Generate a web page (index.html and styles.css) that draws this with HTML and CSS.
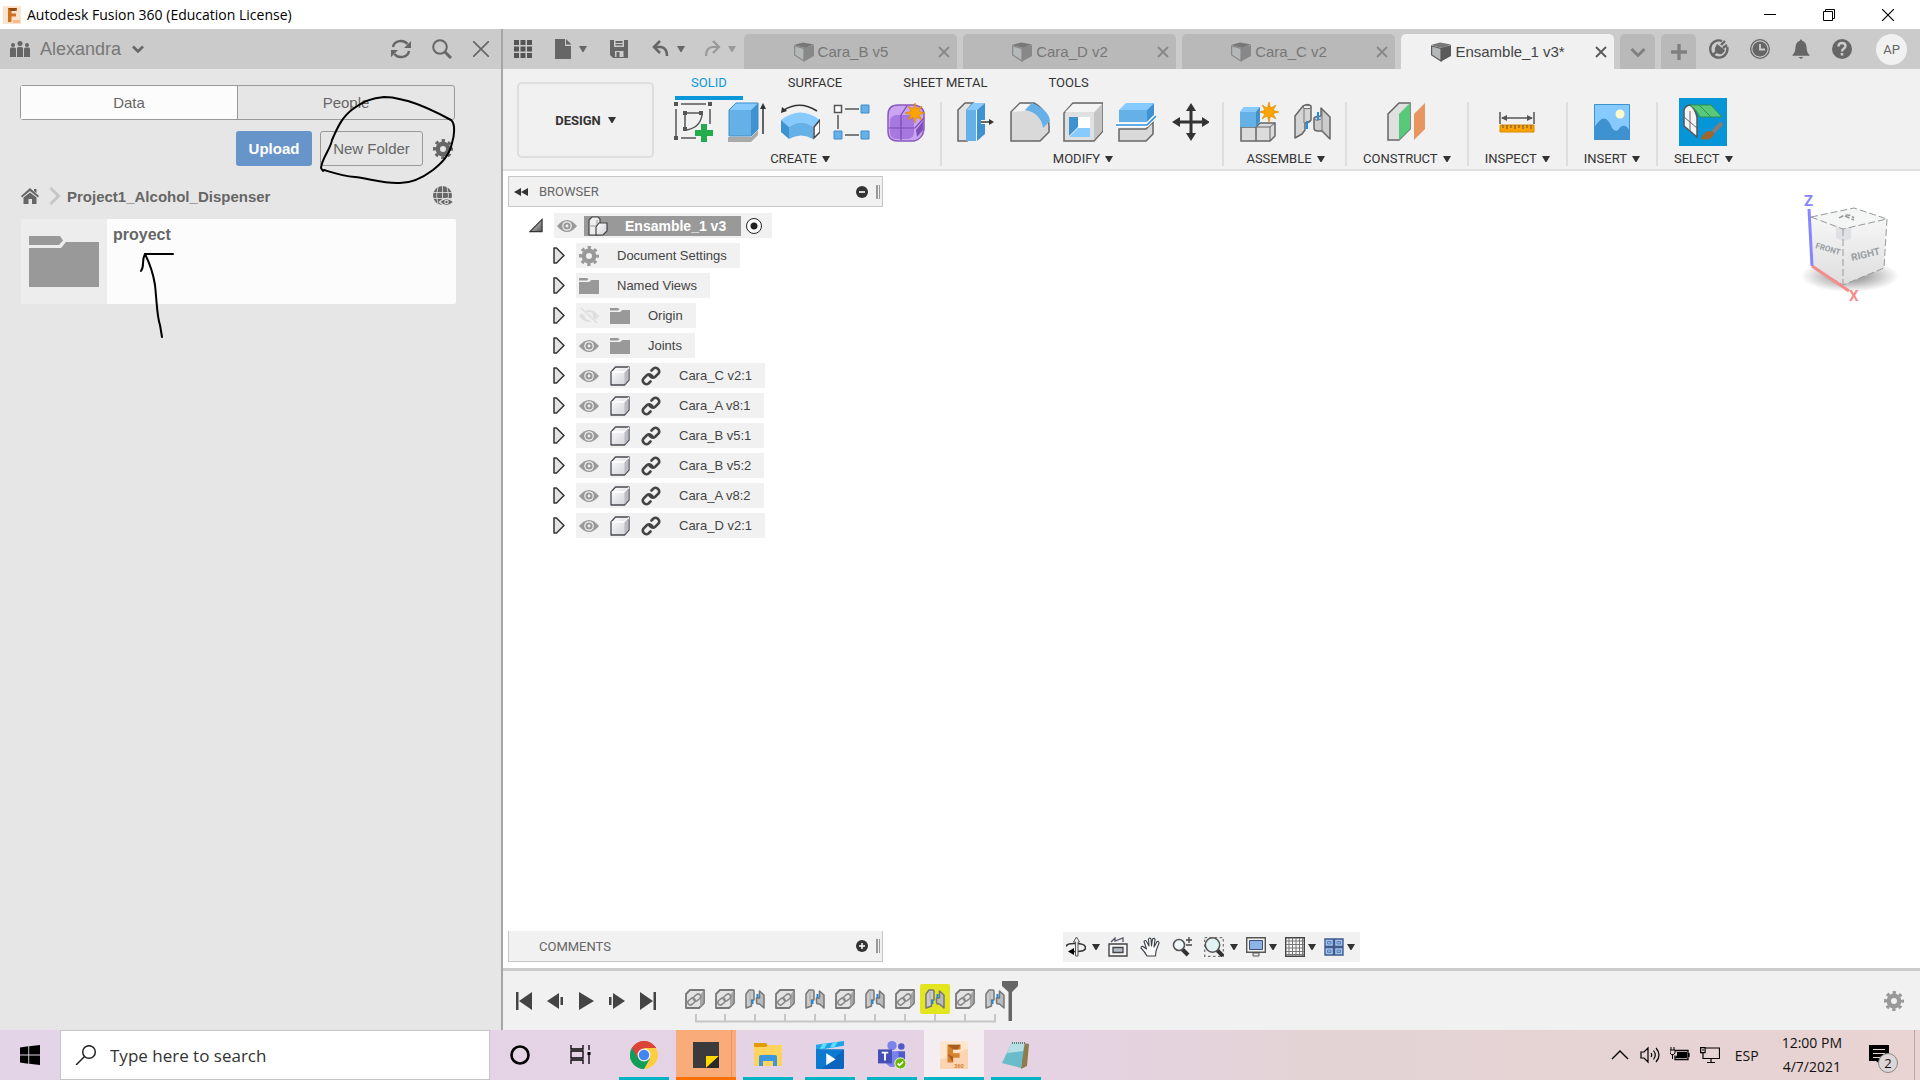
FILE: index.html
```html
<!DOCTYPE html>
<html lang="en">
<head>
  <meta charset="UTF-8">
  <meta name="viewport" content="width=device-width, initial-scale=1.0">
  <title>Autodesk Fusion 360 (Education License)</title>
  <link rel="stylesheet" href="styles.css">
</head>
<body>
  <!-- shared icons -->
  <svg class="sprite" aria-hidden="true">
    <defs>
      <linearGradient id="boxFill" x1="0" y1="0" x2="1" y2="1"><stop offset="0" stop-color="#fff"/><stop offset="1" stop-color="#cfd0d6"/></linearGradient>
      <linearGradient id="foldFill" x1="0" y1="0" x2="1" y2="1"><stop offset="0" stop-color="#eee"/><stop offset="1" stop-color="#555"/></linearGradient>
    </defs>
    <symbol id="caret" viewBox="0 0 8 6"><path d="M0 0h8L4.500 6h-1z" fill="currentColor"/></symbol>
    <symbol id="cross" viewBox="0 0 12 12"><path d="M1 1l10 10M11 1L1 11" stroke="currentColor" stroke-width="1.800" fill="none"/></symbol>
    <symbol id="gear" viewBox="0 0 20 20"><circle cx="10" cy="10" r="5.200" fill="none" stroke="currentColor" stroke-width="4.400"/><circle cx="10" cy="10" r="8.500" fill="none" stroke="currentColor" stroke-width="3" stroke-dasharray="3.340" stroke-dashoffset="1.670"/></symbol>
    <symbol id="eye" viewBox="0 0 20 14"><path d="M0 7Q10-5 20 7Q10 19 0 7z" fill="#999"/><circle cx="10" cy="7" r="4.800" fill="#f1f1f1"/><circle cx="10" cy="7" r="3.600" fill="#999"/><circle cx="10" cy="7" r="1.400" fill="#f1f1f1"/></symbol>
    <symbol id="eye-off" viewBox="0 0 20 16"><path d="M0 8Q10-4 20 8Q10 20 0 8z" fill="#dedede"/><circle cx="10" cy="8" r="4" fill="#f1f1f1"/><circle cx="10" cy="8" r="2" fill="#dedede"/><path d="M1 1l17 15" stroke="#f1f1f1" stroke-width="4"/><path d="M2 0l16 15" stroke="#dedede" stroke-width="1.600"/></symbol>
    <symbol id="folder" viewBox="0 0 20 16"><path d="M0 0h8l1.500 1.300L8 2.600H0zM0 4h10l2.500-2H20v14H0z" fill="#999"/></symbol>
    <symbol id="box" viewBox="0 0 20 20"><path d="M1 6L5.500 1H19v13l-4.500 5H1z" fill="url(#boxFill)" stroke="#4a4a52" stroke-width="1.300" stroke-linejoin="round"/><path d="M1.700 6h13L19 1.500" fill="none" stroke="#fff" stroke-width="1.500"/><path d="M14.500 6.500V18.500L18.400 14V2z" fill="#b9bac2"/></symbol>
    <symbol id="link" viewBox="0 0 20 20"><g fill="none" stroke="#444" stroke-width="2.600" stroke-linecap="round"><path d="M10.500 4.500l2-2q2-1.500 4 0l1 1q1.500 2 0 4l-3.500 3.500q-2 1.500-4 0l-1.500-1.500"/><path d="M9.500 15.500l-2 2q-2 1.500-4 0l-1-1q-1.500-2 0-4L6 9q2-1.500 4 0l1.500 1.500"/></g></symbol>
    <symbol id="expand" viewBox="0 0 12 17"><path d="M1 1h2.500l7.500 7.500L3.500 16H1z" fill="#e4e4e4" stroke="#333" stroke-width="1.500" stroke-linejoin="round"/></symbol>
    <symbol id="doc-cube" viewBox="0 0 20 20"><path d="M0 3L9 0.500l11 2L11 6z" fill="#777"/><path d="M0.600 4L10 6.500V19L0.600 13z" fill="#b5b8b8" stroke="currentColor" stroke-width="1.200"/><path d="M10 6l10-3v11l-10 5.500z" fill="currentColor"/></symbol>
    <symbol id="f-link" viewBox="0 0 20 20"><path d="M1 5L5 1h14v13l-5 5H1z" fill="#e2e2e2" stroke="#777" stroke-width="1.800" stroke-linejoin="round"/><path d="M15 6v12l3.500-4V2z" fill="#a6a6a6"/><g fill="none" stroke="#888" stroke-width="1.500"><rect x="8" y="6" width="8" height="5" rx="2.500" transform="rotate(-40 12 8.500)"/><rect x="2.500" y="10" width="8" height="5" rx="2.500" transform="rotate(-40 6.500 12.500)"/></g></symbol>
    <symbol id="f-joint" viewBox="0 0 20 20"><path d="M1 5l3-4h3.500q1.500 0 1.500 1.500V11H6.500v6L1 19z" fill="#ccc" stroke="#777" stroke-width="1.500" stroke-linejoin="round"/><path d="M5 3v9" stroke="#aaa"/><path d="M14.500 2L19 6v13l-4.500-4H13q-1.500 0-1.500-1.500V9h3z" fill="#bbb" stroke="#777" stroke-width="1.500" stroke-linejoin="round"/><path d="M7.500 11v4M12.500 5v4" stroke="#1e88d8" stroke-width="2"/></symbol>
    <symbol id="star" viewBox="0 0 20 20"><path d="M10 0l1.600 6L17 3l-3 5.300 6 1.700-6 1.700L17 17l-5.400-3L10 20l-1.600-6L3 17l3-5.300L0 10l6-1.700L3 3l5.400 3z" fill="#ffa300" stroke="#d98800" stroke-width=".6"/></symbol>
  </svg>

  <header class="titlebar">
    <svg class="i18" viewBox="0 0 18 18"><rect width="18" height="18" fill="#fde3cb"/><path d="M5 2h9v3H8.500v2.500H13v3H8.500V16H5z" fill="#cf7022"/><path d="M5 2h9l-2 3H8z" fill="#8d4a14"/><path d="M10 14h7v3h-7z" fill="#f7bb8a"/></svg>
    <h1>Autodesk Fusion 360 (Education License)</h1>
    <div class="window-buttons">
      <button aria-label="Minimize"><svg viewBox="0 0 12 12"><path d="M0 5.500h12" stroke="#000"/></svg></button>
      <button aria-label="Restore"><svg viewBox="0 0 12 12"><path d="M.5 2.500h9v9h-9zM2.500 2.500v-2h9v9h-2" fill="none" stroke="#000"/></svg></button>
      <button aria-label="Close"><svg viewBox="0 0 12 12"><path d="M0 0l12 12M12 0L0 12" stroke="#000" stroke-width="1.200"/></svg></button>
    </div>
  </header>

  <div class="workspace">
    <aside class="data-panel">
      <div class="data-head">
        <svg class="i20" viewBox="0 0 20 16" fill="#666"><circle cx="3" cy="4" r="2"/><circle cx="10" cy="2.500" r="2.500"/><circle cx="17" cy="4" r="2"/><path d="M0 8q0-1.500 1.500-1.500h3Q6 6.500 6 8v8H0zM7 7.500Q7 6 8.500 6h3Q13 6 13 7.500V16H7zM14 8q0-1.500 1.500-1.500h3Q20 6.500 20 8v8h-6z"/></svg>
        <button class="team">Alexandra <svg viewBox="0 0 12 8"><path d="M1 1.500l5 5 5-5" fill="none" stroke="#666" stroke-width="2.500"/></svg></button>
        <div class="data-tools">
          <button aria-label="Refresh"><svg class="i20" viewBox="0 0 20 20"><path d="M2 8A8 7 0 0 1 16.500 5M18 12A8 7 0 0 1 3.500 15" fill="none" stroke="#666" stroke-width="2.400"/><path d="M20 2v7h-7zM0 18v-7h7z" fill="#666"/></svg></button>
          <button aria-label="Search"><svg class="i20" viewBox="0 0 20 20"><circle cx="8" cy="8" r="6.800" fill="none" stroke="#666" stroke-width="2"/><path d="M13 13l6 6" stroke="#666" stroke-width="3"/></svg></button>
          <button aria-label="Close panel"><svg class="i16" viewBox="0 0 16 16"><path d="M0 0l16 16M16 0L0 16" stroke="#666" stroke-width="1.600"/></svg></button>
        </div>
      </div>
      <div class="data-body">
        <div class="switch">
          <button class="active">Data</button>
          <button>People</button>
        </div>
        <div class="actions">
          <button class="upload">Upload</button>
          <button class="new-folder">New Folder</button>
          <button class="gear" aria-label="Settings"><svg class="i20"><use href="#gear"/></svg></button>
        </div>
        <nav class="crumbs">
          <a href="#" aria-label="Home"><svg class="i18" viewBox="0 0 18 16" fill="#666"><path d="M9 0l9 8-1 1.500L9 3 1 9.500 0 8zM13 1h2.500v4L13 3z"/><path d="M2.500 9.500L9 4.500l6.500 5V16H11v-5H7.500v5h-5z"/></svg></a>
          <svg class="sep" viewBox="0 0 12 18"><path d="M1.500 1l8 8-8 8" fill="none" stroke="#c6c6c6" stroke-width="3"/></svg>
          <a href="#">Project1_Alcohol_Dispenser</a>
          <button class="globe" aria-label="Open on web"><svg class="i20" viewBox="0 0 20 20"><circle cx="9.500" cy="9.500" r="9.500" fill="#666"/><path d="M0 6.500h19M0 12.500h19M9.500 0v19M5 1q-3 8.500 0 17M14 1q3 8.500 0 17" fill="none" stroke="#e6e6e6" stroke-width=".8"/><path d="M6.500 16q7-7 14 0-7 7-14 0z" fill="#666" stroke="#e6e6e6" stroke-width="1.200"/><circle cx="13.500" cy="16" r="2.300" fill="#e6e6e6"/><circle cx="13.500" cy="16" r="1.200" fill="#666"/></svg></button>
        </nav>
        <div class="project">
          <div class="thumb"><svg viewBox="0 0 70 51" fill="#999"><path d="M0 0h31l3 4.500L30 9H0zM0 12h32l5-6h33v45H0z"/></svg></div>
          <a href="#">proyect</a>
        </div>
      </div>
      <!-- pen marks -->
      <svg class="ink" viewBox="0 29 501 320" fill="none" stroke="#000" stroke-width="2" stroke-linecap="round" stroke-linejoin="round">
        <path d="M323 171L321 168C322 158 331 148 332 140C338 126 343 116 353 109C364 101 372 98 384 97C396 97 398 99 408 101C425 106 440 114 451 120C456 124 454 137 452 143C449 157 440 164 433 170C421 179 410 184 397 183C382 183 366 178 355 177C343 176 334 173 324 170"/>
        <path d="M141 271C145 266 141 261 145 254H173M145 254C150 264 153 272 155 285C157 304 157 317 160 325L162 337"/>
      </svg>
    </aside>

    <main class="editor">
      <div class="docbar">
        <div class="quick">
          <button aria-label="Data panel"><svg class="i20" viewBox="0 0 20 20" fill="#555"><path d="M1 1h5v5H1zM7.500 1h5v5h-5zM14 1h5v5h-5zM1 7.500h5v5H1zM7.500 7.500h5v5h-5zM14 7.500h5v5h-5zM1 14h5v5H1zM7.500 14h5v5h-5zM14 14h5v5h-5z"/></svg></button>
          <button aria-label="File"><svg class="i20" viewBox="0 0 20 20" fill="#666"><path d="M2 0h10v7h6v13H2z"/><path d="M13 0l5.500 5.500H13z"/></svg><svg class="caret"><use href="#caret"/></svg></button>
          <button class="save" aria-label="Save"><svg class="i20" viewBox="0 0 20 20"><path d="M1 1h18v18H4l-3-3z" fill="#666"/><path d="M5 1h10v7H5zM6 12h8.500v6H6z" fill="#ccc"/><path d="M6.500 2h7v2h-7zM6.500 5h7v1.500h-7zM7.500 13h3v6h-3z" fill="#666"/></svg></button>
          <button aria-label="Undo"><svg class="i20" viewBox="0 0 20 20"><path d="M3 8h7q6 1 6 9" fill="none" stroke="#666" stroke-width="2.600"/><path d="M9 2L3 8l6 6" fill="none" stroke="#666" stroke-width="2.600"/></svg><svg class="caret"><use href="#caret"/></svg></button>
          <button class="off" aria-label="Redo" disabled><svg class="i20" viewBox="0 0 20 20"><path d="M14 8H7q-6 1-6 9" fill="none" stroke="#999" stroke-width="2.200"/><path d="M8 2l6 6-6 6" fill="none" stroke="#999" stroke-width="2.200"/></svg><svg class="caret"><use href="#caret"/></svg></button>
        </div>
        <div class="tabs">
          <div class="tab"><a href="#"><svg class="i20"><use href="#doc-cube"/></svg>Cara_B v5</a><button aria-label="Close tab"><svg class="i12"><use href="#cross"/></svg></button></div>
          <div class="tab"><a href="#"><svg class="i20"><use href="#doc-cube"/></svg>Cara_D v2</a><button aria-label="Close tab"><svg class="i12"><use href="#cross"/></svg></button></div>
          <div class="tab"><a href="#"><svg class="i20"><use href="#doc-cube"/></svg>Cara_C v2</a><button aria-label="Close tab"><svg class="i12"><use href="#cross"/></svg></button></div>
          <div class="tab active"><a href="#"><svg class="i20"><use href="#doc-cube"/></svg>Ensamble_1 v3*</a><button aria-label="Close tab"><svg class="i12"><use href="#cross"/></svg></button></div>
          <button class="tab-btn" aria-label="All tabs"><svg class="i16" viewBox="0 0 16 16"><path d="M1.500 5L8 11.500 14.500 5" fill="none" stroke="#808080" stroke-width="3"/></svg></button>
          <button class="tab-btn" aria-label="New tab"><svg class="i16" viewBox="0 0 16 16"><path d="M0 8h16M8 0v16" stroke="#808080" stroke-width="3.400"/></svg></button>
        </div>
        <div class="status">
          <button aria-label="Extensions"><svg class="i20" viewBox="0 0 20 20"><path d="M13 2A8.600 8.600 0 1 0 18.200 8" fill="none" stroke="#666" stroke-width="2.400"/><path d="M5 5l7 7" stroke="#ccc" stroke-width="1.500"/><path d="M3 17l5-5M12 6l4-4M14 9l4-3" stroke="#666" stroke-width="2.400"/><path d="M8 5l8 6q-2 5-6 4-5-1-4-6z" fill="#666"/></svg></button>
          <button aria-label="Job status"><svg class="i20" viewBox="0 0 20 20"><circle cx="10" cy="10" r="9.300" fill="none" stroke="#666" stroke-width="1.300"/><circle cx="10" cy="10" r="7.600" fill="#666"/><path d="M10 5v5.500h5" fill="none" stroke="#ccc" stroke-width="1.800"/></svg></button>
          <button aria-label="Notifications"><svg class="i20" viewBox="0 0 20 20" fill="#666"><path d="M10 0l1.500 2Q15 3 15.500 8q0 5 3 8v.8h-17V16q3-3 3-8Q5 3 8.500 2zM7.500 18h5l-2.500 2z"/></svg></button>
          <button aria-label="Help"><svg class="i20" viewBox="0 0 20 20"><circle cx="10" cy="10" r="10" fill="#666"/><path d="M6.500 7.500q0-3.500 3.500-3.500t3.500 3q0 1.500-1.800 2.700T10 12.500" fill="none" stroke="#ccc" stroke-width="2.400"/><path d="M8.700 14h2.600v2.500H8.700z" fill="#ccc"/></svg></button>
          <button class="avatar">AP</button>
        </div>
      </div>

      <div class="ribbon">
        <button class="design">DESIGN <svg class="caret"><use href="#caret"/></svg></button>
        <div class="ribbon-main">
          <nav class="modes">
            <a href="#" class="active">SOLID</a>
            <a href="#">SURFACE</a>
            <a href="#">SHEET METAL</a>
            <a href="#">TOOLS</a>
          </nav>
          <div class="groups">
            <section class="group create">
              <div class="tools">
                <button aria-label="Create sketch"><svg viewBox="0 0 40 40"><path d="M2 7v27M7 2h25M36 7v15M7 36h15" stroke="#555" stroke-width="1.500"/><path d="M13 11h13M11 13v13M28 13q-2 13-16 15" stroke="#555" stroke-width="1.500" fill="none"/><path d="M0 0h4v4H0zM34 0h4v4h-4zM0 34h4v4H0zM9 9h4v4H9zM25 9h4v4h-4zM9 25h4v4H9z" fill="#555"/><path d="M27 22h6v6h6v6h-6v6h-6v-6h-6v-6h6z" fill="#22ac4b"/></svg></button>
                <button aria-label="Extrude"><svg viewBox="0 0 40 40"><path d="M1 35h23l7-7v5l-7 7H1z" fill="#aaa"/><path d="M2 8h22v26H2z" fill="#66b0e8"/><path d="M2 8l7-7h22l-7 7z" fill="#87caff"/><path d="M24 8l7-7v26l-7 7z" fill="#3f92d0"/><path d="M2 8l7-7h22v26l-7 7H2z" fill="none" stroke="#3d8dcb"/><path d="M36 32V5" stroke="#333" stroke-width="1.500"/><path d="M33 7l3-6 3 6z" fill="#333"/></svg></button>
                <button aria-label="Revolve"><svg viewBox="0 0 40 40"><path d="M1 18Q20 3 40 18l-7 7q-12-9-24 0z" fill="#87caff"/><path d="M1 18l8 7v12l-8-7z" fill="#3f92d0"/><path d="M9 25q12-9 24 0v12q-12-7-24 0z" fill="#66b0e8"/><path d="M34 25l6-7v12l-6 6z" fill="#fff" stroke="#444" stroke-width="1.500"/><path d="M4 8Q20-2 37 9" fill="none" stroke="#333" stroke-width="1.500"/><path d="M1 11l1-6 5 4z" fill="#333"/></svg></button>
                <button aria-label="Pattern"><svg viewBox="0 0 40 40"><path d="M12 7h14M5 13v14M12 33h14" stroke="#555" stroke-width="1.500"/><path d="M1.500 3.500h7v7h-7z" fill="#fff" stroke="#555" stroke-width="1.500"/><path d="M28 3h8v8h-8zM28 29h8v8h-8zM1 29h8v8H1z" fill="#66b0e8" stroke="#3d8dcb"/></svg></button>
                <button aria-label="Create form"><svg viewBox="0 0 40 40"><path d="M2 13Q2 3 12 3h17q9 2 9 9v15q-1 10-10 12H12Q2 39 2 30z" fill="#c9a5f2" stroke="#8a58bd" stroke-width="1.500"/><path d="M4 20q0-7 7-7h11q6 0 6 6v11q0 7-7 7H11q-7 0-7-7z" fill="#a678e0"/><path d="M3 26h26l9-10M15 38V13l6-9" fill="none" stroke="#7a4cb0" stroke-width="1.200"/><path d="M30 28l7-9v9l-6 7z" fill="#8050ba"/><use href="#star" x="19" y="1" width="20" height="20"/></svg></button>
              </div>
              <button class="group-label">CREATE <svg class="caret"><use href="#caret"/></svg></button>
            </section>
            <section class="group">
              <div class="tools">
                <button aria-label="Press pull"><svg viewBox="0 0 40 40"><path d="M1 8l7-7h8l-6 7v31H1z" fill="#e2e2e2" stroke="#666" stroke-width="1.500"/><path d="M9 8h10v31H9z" fill="#66b0e8"/><path d="M9 8l7-7h12l-8 7z" fill="#87caff"/><path d="M20 8l8-7v31l-8 7z" fill="#3f92d0"/><path d="M24 20h9" stroke="#fff" stroke-width="4"/><path d="M24 20h9" stroke="#333" stroke-width="1.500"/><path d="M32 17l5 3-5 3z" fill="#333"/></svg></button>
                <button aria-label="Fillet"><svg viewBox="0 0 40 40"><path d="M1 10l9-9h14q15 9 15 24v5l-9 9H1z" fill="#d9d9d9" stroke="#666" stroke-width="1.500"/><path d="M2 10l8-8h10l-6 7z" fill="#f4f4f4"/><path d="M15 8l7-7q17 7 18 18l-7 7Q31 11 15 8z" fill="#66b0e8"/></svg></button>
                <button aria-label="Shell"><svg viewBox="0 0 40 40"><path d="M1 11L10 1h30v28L31 39H1z" fill="#e0e0e0" stroke="#666" stroke-width="1.500"/><path d="M2 10l8-8h29l-8 8z" fill="#f4f4f4"/><path d="M31 11l8-9v27l-8 9z" fill="#c4c4c4"/><path d="M6 15h21v20H6z" fill="#fff"/><path d="M6 15h9v10L6 34z" fill="#3f92d0"/><path d="M6 35l9-9h12v9z" fill="#87caff"/></svg></button>
                <button aria-label="Split body"><svg viewBox="0 0 40 40"><path d="M3 27h27l7-7v12l-7 7H3z" fill="#d9d9d9" stroke="#666" stroke-width="1.500"/><path d="M3 8h28v12H3z" fill="#66b0e8"/><path d="M3 8l7-7h28l-7 7z" fill="#87caff"/><path d="M31 8l7-7v12l-7 7z" fill="#3f92d0"/><path d="M0 23h31l9-9" fill="none" stroke="#fff" stroke-width="4"/><path d="M0 23h31l9-9" fill="none" stroke="#2d8fdd" stroke-width="1.600"/></svg></button>
                <button aria-label="Move"><svg viewBox="0 0 40 40"><path d="M22 6v28M8 20h28" stroke="#333" stroke-width="3"/><path d="M22 1l5 8H17zM22 39l5-8H17zM3 20l8-5v10zM41 20l-8-5v10z" fill="#333"/></svg></button>
              </div>
              <button class="group-label">MODIFY <svg class="caret"><use href="#caret"/></svg></button>
            </section>
            <section class="group">
              <div class="tools">
                <button aria-label="New component"><svg viewBox="0 0 40 40"><path d="M2 25h15v14H2zM17 25l4-4h15v13l-5 5H17z" fill="#dcdcdc" stroke="#666" stroke-width="1.500"/><path d="M17 25h14l5-4M31 25v14" fill="none" stroke="#666"/><path d="M1 10l4-5h16v14l-4 6H1z" fill="#66b0e8"/><path d="M1 10l4-5h16l-4 5z" fill="#87caff"/><path d="M17 10l4-5v14l-4 6z" fill="#3f92d0"/><use href="#star" x="20" y="0" width="20" height="20"/></svg></button>
                <button aria-label="Joint"><svg viewBox="0 0 40 40"><path d="M3 14l8-10q5-3 8 0v14q-2 3-6 3v7l-3 4-7 4z" fill="#d5d5d5" stroke="#666" stroke-width="1.500" stroke-linejoin="round"/><path d="M12 5v16" stroke="#777"/><ellipse cx="15" cy="5" rx="4" ry="1.800" fill="#eee" stroke="#666"/><path d="M29 6l9 9v22l-8-8h-4q-4 0-4-3V16q2-2 7-2z" fill="#ccc" stroke="#666" stroke-width="1.500" stroke-linejoin="round"/><path d="M30 8v21M22 17q3 3 7 0" fill="none" stroke="#777"/><path d="M15 19v8M26 10v8" stroke="#1e90e8" stroke-width="2"/></svg></button>
              </div>
              <button class="group-label">ASSEMBLE <svg class="caret"><use href="#caret"/></svg></button>
            </section>
            <section class="group single">
              <div class="tools">
                <button aria-label="Offset plane"><svg viewBox="0 0 40 40"><path d="M1 12L12 1h11v26L12 38H1z" fill="#e0e0e0" stroke="#666" stroke-width="1.500"/><path d="M12 12L23 1v26L12 38z" fill="#58c87a"/><path d="M27 12L38 1v26L27 38z" fill="#e89660"/></svg></button>
              </div>
              <button class="group-label">CONSTRUCT <svg class="caret"><use href="#caret"/></svg></button>
            </section>
            <section class="group single">
              <div class="tools">
                <button aria-label="Measure"><svg viewBox="0 0 40 40"><path d="M3 10v12M37 10v12M5 16h30" stroke="#555" stroke-width="1.500"/><path d="M4 16l6-3v6zM36 16l-6-3v6z" fill="#555"/><path d="M3 23h34v7H3z" fill="#ffa300" stroke="#d98800"/><path d="M6 23v3M10 23v4M14 23v3M18 23v4M22 23v3M26 23v4M30 23v3M34 23v4" stroke="#555"/></svg></button>
              </div>
              <button class="group-label">INSPECT <svg class="caret"><use href="#caret"/></svg></button>
            </section>
            <section class="group single">
              <div class="tools">
                <button aria-label="Insert image"><svg viewBox="0 0 40 40"><path d="M2 2h36v36H2z" fill="#87caff"/><circle cx="28" cy="12" r="4.500" fill="#fffbc8"/><path d="M2 26q11-19 18 0 3 4 6 2 6-9 12 1v9H2z" fill="#3f92d0"/><path d="M2.500 2.500h35v35h-35z" fill="none" stroke="#3f92d0"/></svg></button>
              </div>
              <button class="group-label">INSERT <svg class="caret"><use href="#caret"/></svg></button>
            </section>
            <section class="group single last">
              <div class="tools">
                <button class="picked" aria-label="Select"><svg viewBox="0 0 48 48"><path d="M5 12q1-4 6-5 5 3 7 12v20L5 28z" fill="#f4f4f4" stroke="#555" stroke-width="1.500"/><path d="M5 19l13 11M11 13v20" stroke="#666"/><path d="M11 7h21l11 12H21q-4-8-10-12z" fill="#58c87a" stroke="#2f8f50"/><path d="M20 7l12 12" stroke="#2f8f50"/><path d="M43 25l-9 9" stroke="#8a7a70" stroke-width="4"/><path d="M22 41q3-8 9-8 5 1 4 4-4 6-13 4z" fill="#a0662a"/></svg></button>
              </div>
              <button class="group-label">SELECT <svg class="caret"><use href="#caret"/></svg></button>
            </section>
          </div>
        </div>
      </div>

      <div class="canvas">
        <div class="canvas-top">
          <section class="browser">
            <div class="palette">
              <button class="fold" aria-label="Collapse"><svg viewBox="0 0 14 8"><path d="M7 0v8L0 4zM14 0v8L7 4z" fill="#333"/></svg></button>
              <h2>BROWSER</h2>
              <button aria-label="Hide"><svg class="i12" viewBox="0 0 12 12"><circle cx="6" cy="6" r="6" fill="#333"/><path d="M3 6h6" stroke="#fff" stroke-width="1.600"/></svg></button>
              <span class="grip"></span>
            </div>
            <div class="tree">
              <div class="node root"><svg class="open" viewBox="0 0 15 15"><path d="M14 1v13H1z" fill="url(#foldFill)" stroke="#333" stroke-width="1.300"/></svg>
                <div class="item"><svg class="i20"><use href="#eye"/></svg><span class="selected"><svg class="i20" viewBox="0 0 20 20"><path d="M1 4l3-3h6l2 2v8l-2 8H1z" fill="#eee" stroke="#444" stroke-width="1.200"/><path d="M1 10h8M9 4v6" stroke="#999"/><path d="M8 11l3-4h8v8l-4 4H8z" fill="url(#boxFill)" stroke="#444" stroke-width="1.200"/></svg><b>Ensamble_1 v3</b></span><input type="radio" name="active" aria-label="Activate Ensamble_1" checked></div></div>
              <div class="children">
                <div class="node"><svg class="closed"><use href="#expand"/></svg><div class="item"><svg class="i20 grey"><use href="#gear"/></svg><span>Document Settings</span></div></div>
                <div class="node"><svg class="closed"><use href="#expand"/></svg><div class="item"><svg class="i20"><use href="#folder"/></svg><span>Named Views</span></div></div>
                <div class="node"><svg class="closed"><use href="#expand"/></svg><div class="item"><svg class="i20"><use href="#eye-off"/></svg><svg class="i20"><use href="#folder"/></svg><span>Origin</span></div></div>
                <div class="node"><svg class="closed"><use href="#expand"/></svg><div class="item"><svg class="i20"><use href="#eye"/></svg><svg class="i20"><use href="#folder"/></svg><span>Joints</span></div></div>
                <div class="node"><svg class="closed"><use href="#expand"/></svg><div class="item"><svg class="i20"><use href="#eye"/></svg><svg class="i20"><use href="#box"/></svg><svg class="i20"><use href="#link"/></svg><span>Cara_C v2:1</span></div></div>
                <div class="node"><svg class="closed"><use href="#expand"/></svg><div class="item"><svg class="i20"><use href="#eye"/></svg><svg class="i20"><use href="#box"/></svg><svg class="i20"><use href="#link"/></svg><span>Cara_A v8:1</span></div></div>
                <div class="node"><svg class="closed"><use href="#expand"/></svg><div class="item"><svg class="i20"><use href="#eye"/></svg><svg class="i20"><use href="#box"/></svg><svg class="i20"><use href="#link"/></svg><span>Cara_B v5:1</span></div></div>
                <div class="node"><svg class="closed"><use href="#expand"/></svg><div class="item"><svg class="i20"><use href="#eye"/></svg><svg class="i20"><use href="#box"/></svg><svg class="i20"><use href="#link"/></svg><span>Cara_B v5:2</span></div></div>
                <div class="node"><svg class="closed"><use href="#expand"/></svg><div class="item"><svg class="i20"><use href="#eye"/></svg><svg class="i20"><use href="#box"/></svg><svg class="i20"><use href="#link"/></svg><span>Cara_A v8:2</span></div></div>
                <div class="node"><svg class="closed"><use href="#expand"/></svg><div class="item"><svg class="i20"><use href="#eye"/></svg><svg class="i20"><use href="#box"/></svg><svg class="i20"><use href="#link"/></svg><span>Cara_D v2:1</span></div></div>
              </div>
            </div>
          </section>
          <svg class="viewcube" viewBox="0 0 120 120">
            <defs>
              <radialGradient id="shade"><stop offset=".3" stop-color="#000" stop-opacity=".35"/><stop offset="1" stop-color="#000" stop-opacity="0"/></radialGradient>
              <linearGradient id="face" x1="0" y1="0" x2="0" y2="1"><stop offset="0" stop-color="#f6f6f6"/><stop offset="1" stop-color="#dedede"/></linearGradient>
            </defs>
            <ellipse cx="50" cy="91" rx="49" ry="16" fill="url(#shade)"/>
            <path d="M11 32L54 23l33 11-44 10z" fill="#f4f5f5"/>
            <path d="M11 32l32 12v56L13 82z" fill="url(#face)"/>
            <path d="M43 44l44-10-3 49-41 17z" fill="url(#face)"/>
            <path d="M36 41l7 3 8-2v12l-8 2-7-3z" fill="#dfe1e4"/>
            <path d="M11 32L54 23l33 11M11 32l32 12 44-10M43 44v56M87 34l-3 49-41 17-30-18" fill="none" stroke="#999" stroke-dasharray="7 3"/>
            <path d="M39 33q9-6 15 0m-9-2l9 4" fill="none" stroke="#999" stroke-width="1.500" stroke-dasharray="5 2"/>
            <path d="M9 24l3 57" stroke="#8585ff" stroke-width="3"/>
            <path d="M12 81l37 25" stroke="#f58c8c" stroke-width="3"/>
            <text class="axis-z" x="4" y="21">Z</text>
            <text class="axis-x" x="49" y="116">X</text>
            <text class="face-front" transform="translate(15 63) rotate(16)">FRONT</text>
            <text class="face-right" transform="translate(52 76) rotate(-13)">RIGHT</text>
          </svg>
        </div>
        <div class="canvas-bottom">
          <div class="palette comments">
            <h2>COMMENTS</h2>
            <button aria-label="Add comment"><svg class="i12" viewBox="0 0 12 12"><circle cx="6" cy="6" r="6" fill="#333"/><path d="M3 6h6M6 3v6" stroke="#fff" stroke-width="1.500"/></svg></button>
            <span class="grip"></span>
          </div>
          <div class="navbar">
            <button class="wide" aria-label="Orbit"><svg class="i20" viewBox="0 0 20 20"><path d="M0 9.500Q1 6 10 6.500q9 0 9.500 4t-9 4H6" fill="none" stroke="#333" stroke-width="1.600"/><path d="M9.500 19V5H7.500L10.500 0l3 5H12v14z" fill="#eee" stroke="#555"/><path d="M2 14.500l6-3.500v7z" fill="#000"/></svg><svg class="caret"><use href="#caret"/></svg></button>
            <button aria-label="Look at"><svg class="i20" viewBox="0 0 20 20"><path d="M1 7h18v12H1z" fill="#f6f6f6" stroke="#444" stroke-width="1.400"/><path d="M5 10.500h10v5H5z" fill="#b8bcc8" stroke="#444" stroke-width="1.300"/><path d="M3 5l4-4v3l8-3v4" fill="none" stroke="#556" stroke-width="1.300"/></svg></button>
            <button aria-label="Pan"><svg class="i20" viewBox="0 0 20 20"><path d="M7 19Q5 15 1 11q0-2 2-1.500L6.500 12 4 4.500q1.500-2 2.500 0L9 9 8.500 2q1.500-2 2.500 0l.5 7 1-7q2-1.500 2.500.5L14 10l3-5.500q2-.5 2 1.500l-3 8-.5 5z" fill="#fafafa" stroke="#3c4048" stroke-width="1.100" stroke-linejoin="round"/></svg></button>
            <button aria-label="Zoom"><svg class="i20" viewBox="0 0 20 20"><path d="M10 12l6 6" stroke="#333" stroke-width="4"/><circle cx="7" cy="8" r="5.500" fill="#eef8f8" stroke="#555" stroke-width="1.600"/><path d="M14 3h6M17 0v6M14 8h6" stroke="#444" stroke-width="1.300"/></svg></button>
            <button class="wide" aria-label="Fit"><svg class="i20" viewBox="0 0 20 20"><path d="M.7.700h18.600v18.600H.7z" fill="none" stroke="#777" stroke-width="1.300" stroke-dasharray="2.500 2.500"/><path d="M13 13l6 6" stroke="#333" stroke-width="4"/><circle cx="8.500" cy="8" r="7.200" fill="#e2f3f3" stroke="#555" stroke-width="1.500"/></svg><svg class="caret"><use href="#caret"/></svg></button>
            <button aria-label="Display settings"><svg class="i20" viewBox="0 0 20 20"><path d="M.7.700h18.600v14.600H.7z" fill="#f4f4f4" stroke="#555" stroke-width="1.400"/><path d="M3.500 3.500h13v9h-13z" fill="#8db4e6" stroke="#3d4f75"/><path d="M7 16h6v3H7z" fill="#eee" stroke="#555"/></svg><svg class="caret"><use href="#caret"/></svg></button>
            <button aria-label="Grid and snaps"><svg class="i20" viewBox="0 0 20 20"><path d="M.7.700h18.600v18.600H.7z" fill="#fafafa" stroke="#444" stroke-width="1.400"/><path d="M4 1v18M7.500 1v18M11 1v18M14.500 1v18M17.500 1v18M1 4h18M1 7.500h18M1 11h18M1 14.500h18M1 17.500h18" stroke="#777"/></svg><svg class="caret"><use href="#caret"/></svg></button>
            <button aria-label="Viewports"><svg class="i20" viewBox="0 0 20 20"><path d="M1 2h8.500v7.500H1zM10.500 2H19v7.500h-8.500zM1 10.500h8.500V18H1zM10.500 10.500H19V18h-8.500z" fill="#a9c4ea" stroke="#3d5a8c" stroke-width="1.400"/><path d="M3.500 4.500h3.500v2.500H3.500zM13 4.500h3.500v2.500H13zM3.500 13h3.500v2.500H3.500zM13 13h3.500v2.500H13z" fill="#8db4e6" stroke="#5a82bd"/></svg><svg class="caret"><use href="#caret"/></svg></button>
          </div>
        </div>
      </div>

      <div class="timeline">
        <div class="player">
          <button aria-label="Go to start"><svg viewBox="0 0 16 18"><path d="M0 0h2.500v18H0zM16 0v18L3 9z"/></svg></button>
          <button aria-label="Step back"><svg viewBox="0 0 16 18"><path d="M12 1v16L0 9zM13.500 5H16v8h-2.500z"/></svg></button>
          <button aria-label="Play"><svg viewBox="0 0 16 18"><path d="M1 0l15 9-15 9z"/></svg></button>
          <button aria-label="Step forward"><svg viewBox="0 0 16 18"><path d="M4 1v16l12-8zM0 5h2.500v8H0z"/></svg></button>
          <button aria-label="Go to end"><svg viewBox="0 0 16 18"><path d="M16 0h-2.500v18H16zM0 0v18l13-9z"/></svg></button>
        </div>
        <div class="history">
          <div class="features">
            <button aria-label="Insert"><svg class="i20"><use href="#f-link"/></svg></button>
            <button aria-label="Insert"><svg class="i20"><use href="#f-link"/></svg></button>
            <button aria-label="Joint"><svg class="i20"><use href="#f-joint"/></svg></button>
            <button aria-label="Insert"><svg class="i20"><use href="#f-link"/></svg></button>
            <button aria-label="Joint"><svg class="i20"><use href="#f-joint"/></svg></button>
            <button aria-label="Insert"><svg class="i20"><use href="#f-link"/></svg></button>
            <button aria-label="Joint"><svg class="i20"><use href="#f-joint"/></svg></button>
            <button aria-label="Insert"><svg class="i20"><use href="#f-link"/></svg></button>
            <button class="marked" aria-label="Joint"><svg class="i20"><use href="#f-joint"/></svg></button>
            <button aria-label="Insert"><svg class="i20"><use href="#f-link"/></svg></button>
            <button aria-label="Joint"><svg class="i20"><use href="#f-joint"/></svg></button>
          </div>
          <svg class="scale" viewBox="0 0 330 9"><path d="M16 0v7.500h299V0M45 0v7M75 0v7M105 0v7M135 0v7M165 0v7M195 0v7M225 0v7M255 0v7M285 0v7" fill="none" stroke="#c6c6c6" stroke-width="2"/></svg>
        </div>
        <svg class="marker" viewBox="0 0 16 40"><path d="M0 0h16v5l-6 6v29H6.500V11L0 5z" fill="#666"/></svg>
        <button class="prefs" aria-label="Timeline settings"><svg class="i20 grey"><use href="#gear"/></svg></button>
      </div>
    </main>
  </div>

  <footer class="taskbar">
    <button class="start" aria-label="Start"><svg class="i20" viewBox="0 0 20 20"><path d="M0 2.500l8.300-1.200v8.200H0zM9.200 1.200L20 0v9.500H9.200zM0 10.500h8.300v8.200L0 17.500zM9.200 10.500H20V20L9.200 18.800z"/></svg></button>
    <label class="search">
      <svg viewBox="0 0 22 20"><circle cx="14" cy="7" r="6.300" fill="none" stroke="#222" stroke-width="1.500"/><path d="M9.500 11.500L1 20" stroke="#222" stroke-width="1.500"/></svg>
      <input type="text" placeholder="Type here to search" aria-label="Type here to search">
    </label>
    <div class="apps">
      <button aria-label="Cortana"><svg viewBox="0 0 28 28"><circle cx="14" cy="14" r="8.500" fill="none" stroke="#000" stroke-width="2.600"/></svg></button>
      <button aria-label="Task view"><svg viewBox="0 0 28 28" fill="none" stroke="#000" stroke-width="1.300"><path d="M3 4v4h12V4M3 23v-4h12v4M3 10h12v7H3zM21 4v5M21 14v9"/><path d="M19.500 11h3v3h-3z" fill="#000" stroke="none"/></svg></button>
      <button class="running" aria-label="Chrome"><svg viewBox="0 0 28 28"><path d="M14 14L1.900 7A14 14 0 0 1 26.100 7z" fill="#db4437"/><path d="M14 14L26.100 7A14 14 0 0 1 14 28z" fill="#ffcd40"/><path d="M14 14V28A14 14 0 0 1 1.900 7z" fill="#0f9d58"/><path d="M14 7h12.100l-6 10.500z" fill="#ffcd40"/><path d="M14 7h12.100A14 14 0 0 0 1.900 7L8 17.500z" fill="#db4437"/><path d="M7.900 17.500L1.900 7A14 14 0 0 0 14 28l6-10.500z" fill="#0f9d58"/><circle cx="14" cy="14" r="6.500" fill="#f1f1f1"/><circle cx="14" cy="14" r="5.200" fill="#4285f4"/></svg></button>
      <button class="running alert" aria-label="Sticky Notes"><svg viewBox="0 0 28 28"><path d="M1 1h26v26H1z" fill="#3b3b3b"/><path d="M14 27V15h13z" fill="#ffd800"/><path d="M14 27l13-12v12z" fill="#2a2a2a"/></svg></button>
      <button class="running" aria-label="File Explorer"><svg viewBox="0 0 28 28"><path d="M0 2h12l2 3v5H0z" fill="#e09c00"/><path d="M0 6h12l2-2h14v21H0z" fill="#ffd45e"/><path d="M5 25V16q0-2 2-2h14q2 0 2 2v9h-4v-5H9v5z" fill="#3a96dd"/></svg></button>
      <button class="running" aria-label="Movies &amp; TV"><svg viewBox="0 0 30 30"><path d="M0 4l30-4v5L0 10z" fill="#1ba4e8"/><path d="M7 3l5-.6L9 8l-5 .6zM18 1.600l5-.6-3 5.400-5 .6z" fill="#5fdcff"/><path d="M0 9h30v19q0 2-2 2H2q-2 0-2-2z" fill="#0b64bd"/><path d="M0 9h30L6 30H2q-2 0-2-2z" fill="#0b7ad0"/><path d="M11 13l10 6.500L11 26z" fill="#fff"/></svg></button>
      <button class="running" aria-label="Teams"><svg viewBox="0 0 30 30"><circle cx="15" cy="5" r="5" fill="#7b83eb"/><circle cx="25" cy="6" r="3.500" fill="#5059c9"/><path d="M19 11h10v10q-3 4-8 2z" fill="#5059c9"/><path d="M8 11h14v12q-4 7-10 4-4-2-4-6z" fill="#7b83eb"/><path d="M0 9h15v15H0z" fill="#464eb8"/><path d="M4 12.500h7M7.500 12.500V21" stroke="#fff" stroke-width="2"/><circle cx="24" cy="24" r="6" fill="#6bb700" stroke="#fff"/><path d="M21 24l2 2 4-4" fill="none" stroke="#fff" stroke-width="1.800"/></svg></button>
      <button class="running current" aria-label="Fusion 360"><svg viewBox="0 0 30 30"><path d="M0 0h30v30H0z" fill="#fce6d0"/><path d="M0 20l30-12v22H0z" fill="#fbd5b3"/><path d="M8 4h14v5h-8v4h7v5h-7v5H8z" fill="#d9812e"/><path d="M8 4h14l-3 5h-5zM8 14l6 3v6z" fill="#a85c1e"/><text class="f360" x="15" y="29">360</text></svg></button>
      <button class="running" aria-label="Notepad"><svg viewBox="0 0 28 28"><path d="M21 2l6 1-2 22-6 3z" fill="#8f7a4a"/><path d="M10 1h13l-4 26L0 22z" fill="#6bbccb"/><path d="M10 1h13l-2 9L5 12z" fill="#b6e0e6"/><path d="M10 2h13" stroke="#777" stroke-width="2" stroke-dasharray="1 1"/></svg></button>
    </div>
    <div class="tray">
      <button aria-label="Hidden icons"><svg class="i20" viewBox="0 0 20 20"><path d="M2 14l8-8 8 8" fill="none" stroke="#000" stroke-width="1.400"/></svg></button>
      <button aria-label="Volume"><svg class="i20" viewBox="0 0 20 20" fill="none" stroke="#000" stroke-width="1.200"><path d="M1 7h3l4-4v14l-4-4H1zM11 8q1.500 2 0 4M13.500 5.500q3.500 4.500 0 9M16 3q6 7 0 14"/></svg></button>
      <button aria-label="Battery"><svg class="i20" viewBox="0 0 20 20"><path d="M5 5.500h13v9H5v-4M19 8v4" fill="none" stroke="#000" stroke-width="1.300"/><path d="M7 7h10v6H5l2-3z"/><path d="M0 5h5v3q-2.500 4-5 0zM1 2v3M4 2v3M2.500 9v5" stroke="#000" fill="none"/></svg></button>
      <button aria-label="Network"><svg class="i20" viewBox="0 0 20 20" fill="none" stroke="#000" stroke-width="1.200"><path d="M5 3h14.500v10.500H3V8M7 17.500h8M11 13.500v4M.6 2.600h4.500v5H.6zM2 5h2"/></svg></button>
      <button class="lang">ESP</button>
      <button class="clock"><span>12:00 PM</span><span>4/7/2021</span></button>
      <button class="notes" aria-label="Action center"><svg viewBox="0 0 20 20"><path d="M0 0h20v16h-8v4l-5-4H0z"/><path d="M4 4.500h12M4 8.500h12M4 12.500h8" stroke="#e8d3d3" stroke-width="1.200"/></svg><span class="badge">2</span></button>
      <span class="peek"></span>
    </div>
  </footer>
</body>
</html>
```
FILE: styles.css
```css
* {
  box-sizing: border-box;
}
body {
  margin: 0;
  height: 100vh;
  display: flex;
  flex-direction: column;
  overflow: hidden;
  font-family: "Liberation Sans", Arial, sans-serif;
  font-size: 15px;
  color: #666;
}
button {
  font: inherit;
  color: inherit;
  background: none;
  border: 0;
  padding: 0;
  display: flex;
  align-items: center;
  justify-content: center;
}
a {
  color: inherit;
  text-decoration: none;
}
h1, h2 {
  margin: 0;
  font-weight: normal;
}
svg {
  display: block;
  flex: none;
}
.sprite {
  position: absolute;
  width: 0;
  height: 0;
}
.i12 { width: 12px; height: 12px; }
.i16 { width: 16px; height: 16px; }
.i18 { width: 18px; height: 18px; }
.i20 { width: 20px; height: 20px; }
.grey { color: #999; }
.caret {
  width: 8px;
  height: 6px;
}

/* title bar */
.titlebar {
  height: 29px;
  flex: none;
  display: flex;
  align-items: center;
  gap: 6px;
  padding: 0 26px 0 3px;
  background: #fff;
}
.titlebar h1 {
  font-family: "Open Sans", sans-serif;
  font-size: 14px;
  color: #000;
}
.window-buttons {
  margin-left: auto;
  display: flex;
  gap: 47px;
}
.window-buttons svg {
  width: 12px;
  height: 12px;
}

.workspace {
  flex: 1;
  min-height: 0;
  display: flex;
}

/* data panel */
.data-panel {
  position: relative;
  width: 503px;
  flex: none;
  background: #e6e6e6;
  border-right: 2px solid #a6a6a6;
}
.data-head {
  height: 40px;
  display: flex;
  align-items: center;
  gap: 10px;
  padding: 0 12px 0 10px;
  background: #cbcbcb;
}
.team {
  font-size: 18px;
  color: #777;
  gap: 11px;
}
.team svg {
  width: 12px;
  height: 8px;
}
.data-tools {
  margin-left: auto;
  display: flex;
  align-items: center;
  gap: 21px;
}
.data-body {
  padding: 16px 45px 0 20px;
}
.switch {
  display: flex;
  height: 35px;
  margin-right: 1px;
  border: 1px solid #999;
  border-radius: 3px;
}
.switch button {
  flex: 1;
}
.switch .active {
  background: #fcfcfc;
  border-right: 1px solid #999;
}
.actions {
  display: flex;
  align-items: center;
  justify-content: flex-end;
  height: 35px;
  margin-top: 11px;
  padding-right: 3px;
}
.upload {
  width: 76px;
  height: 35px;
  border-radius: 3px;
  background: #6795c9;
  color: #fff;
  font-weight: bold;
}
.new-folder {
  width: 103px;
  height: 35px;
  margin-left: 8px;
  border: 1px solid #999;
  border-radius: 3px;
}
.actions .gear {
  margin-left: 10px;
}
.crumbs {
  display: flex;
  align-items: center;
  height: 30px;
  margin-top: 15px;
  padding: 0 3px 0 1px;
  font-weight: bold;
}
.crumbs .sep {
  width: 12px;
  height: 18px;
  margin: 0 6px 0 10px;
}
.globe {
  margin-left: auto;
}
.project {
  display: flex;
  height: 85px;
  margin: 8px 0 0 1px;
  background: #fcfcfc;
  font-size: 16px;
  font-weight: bold;
  border-radius: 2px;
}
.project a {
  padding: 7px 6px;
}
.thumb {
  width: 86px;
  display: flex;
  align-items: center;
  justify-content: center;
  background: #ededed;
}
.thumb svg {
  width: 70px;
  height: 51px;
}
.ink {
  position: absolute;
  top: 0;
  left: 0;
  width: 501px;
  height: 320px;
  pointer-events: none;
}

/* document bar */
.editor {
  flex: 1;
  min-width: 0;
  display: flex;
  flex-direction: column;
}
.docbar {
  height: 40px;
  display: flex;
  align-items: center;
  padding: 0 13px 0 10px;
  background: #cbcbcb;
}
.quick {
  display: flex;
  gap: 20px;
  margin-right: 5px;
}
.quick button {
  gap: 6px;
}
.quick .save {
  padding: 0 2px;
}
.quick .off {
  gap: 3px;
  margin-right: 3px;
  color: #999;
}
.tabs {
  display: flex;
  align-self: flex-end;
  gap: 6px;
}
.tab {
  width: 213px;
  height: 35px;
  display: flex;
  align-items: center;
  padding-right: 7px;
  background: #b9b9b9;
  border-radius: 5px 5px 0 0;
  color: #777;
}
.tab a {
  flex: 1;
  display: flex;
  align-items: center;
  justify-content: center;
  gap: 4px;
}
.tab use {
  color: #888;
}
.tab.active {
  background: #f1f1f1;
  color: #444;
}
.tab.active use {
  color: #5a5a5a;
}
.tab-btn {
  width: 35px;
  height: 35px;
  background: #b9b9b9;
  border-radius: 5px 5px 0 0;
}
.status {
  margin-left: auto;
  display: flex;
  align-items: center;
  gap: 21px;
}
.avatar {
  width: 31px;
  height: 31px;
  margin-left: 3px;
  border-radius: 50%;
  background: #f1f1f1;
  font-family: Roboto, sans-serif;
  font-size: 13px;
}

/* ribbon */
.ribbon {
  height: 102px;
  display: flex;
  background: #f1f1f1;
  border-bottom: 2px solid #e0e0e0;
  padding-left: 14px;
  font-family: Roboto, sans-serif;
  font-size: 13px;
  color: #333;
}
.design {
  width: 137px;
  height: 76px;
  margin-top: 13px;
  border: 2px solid #dedede;
  border-radius: 5px;
  gap: 7px;
  font-weight: bold;
}
.ribbon-main {
  display: flex;
  flex-direction: column;
}
.modes {
  display: flex;
  gap: 29px;
  margin-left: 21px;
}
.modes a {
  height: 31px;
  padding: 0 16px;
  line-height: 28px;
}
.modes .active {
  color: #0b97dc;
  border-bottom: 4px solid #0b97dc;
}
.groups {
  display: flex;
  margin-top: 2px;
}
.group {
  height: 64px;
  padding: 0 13px 0 15px;
  border-right: 2px solid #dedede;
}
.group.create {
  padding: 0 14px 0 20px;
}
.group.single {
  padding: 0 16px;
}
.group.last {
  border: 0;
}
.tools {
  height: 40px;
  display: flex;
  justify-content: center;
  align-items: center;
  gap: 13px;
}
.tools svg {
  width: 40px;
  height: 40px;
}
.tools .picked {
  background: #0696d7;
}
.picked svg {
  width: 48px;
  height: 48px;
}
.group-label {
  width: 100%;
  gap: 5px;
  margin-top: 9px;
  line-height: 16px;
  white-space: nowrap;
}

/* canvas */
.canvas {
  flex: 1;
  min-height: 0;
  display: flex;
  flex-direction: column;
  justify-content: space-between;
  padding: 5px 5px 6px;
  background: #fff;
}
.canvas-top {
  display: flex;
  justify-content: space-between;
}
.palette {
  width: 375px;
  height: 31px;
  display: flex;
  align-items: center;
  padding: 0 1px 0 5px;
  background: #f1f1f1;
  border: 1px solid #c6c6c6;
}
.palette h2 {
  flex: 1;
  font-family: Roboto, sans-serif;
  font-size: 13px;
}
.fold {
  margin-right: 11px;
}
.fold svg {
  width: 14px;
  height: 8px;
}
.grip {
  width: 4px;
  height: 14px;
  margin: 0 1px 0 8px;
  border: solid #999;
  border-width: 0 1px 0 2px;
}
.comments {
  border-top: 0;
  padding-left: 30px;
}
.tree {
  padding: 6px 0 0 21px;
  font-size: 13px;
  color: #444;
}
.node {
  display: flex;
  align-items: center;
  gap: 11px;
  height: 25px;
  margin-bottom: 5px;
}
.children {
  margin-left: 24px;
}
.open {
  width: 14px;
  height: 15px;
}
.closed {
  width: 12px;
  height: 17px;
}
.item {
  height: 25px;
  display: flex;
  align-items: center;
  gap: 11px;
  padding: 0 13px 0 3px;
  background: #f1f1f1;
}
.item span {
  margin-left: 7px;
}
.root .item {
  gap: 5px;
  padding-right: 10px;
}
.item .selected {
  height: 20px;
  display: flex;
  align-items: center;
  gap: 17px;
  margin-left: 2px;
  padding: 0 15px 0 4px;
  background: #999;
  color: #fff;
  font-size: 14px;
}
.item input {
  appearance: none;
  width: 16px;
  height: 16px;
  margin: 0;
  border: 1px solid #222;
  border-radius: 50%;
  background: radial-gradient(#222 3px, #fff 4px);
}
.viewcube {
  width: 120px;
  height: 120px;
  margin: 9px -5px 0 0;
  font-family: Roboto, sans-serif;
}
.axis-z {
  font-size: 15px;
  font-weight: bold;
  fill: #8585ff;
}
.axis-x {
  font-size: 15px;
  font-weight: bold;
  fill: #f58c8c;
}
.face-front {
  font-size: 8px;
  font-weight: bold;
  fill: #999da3;
}
.face-right {
  font-size: 10px;
  font-weight: bold;
  fill: #999da3;
}
.canvas-bottom {
  display: grid;
  grid-template-columns: 1fr auto 1fr;
  align-items: end;
}
.navbar {
  height: 30px;
  display: flex;
  align-items: center;
  gap: 12px;
  padding: 0 5px 0 3px;
  background: #f1f1f1;
  color: #333;
}
.navbar button {
  gap: 3px;
}
.navbar .wide {
  gap: 6px;
}
.navbar .wide + button {
  margin-left: -4px;
}
.navbar button:nth-last-child(-n+2) {
  margin-left: -4px;
}

/* timeline */
.timeline {
  height: 62px;
  flex: none;
  display: flex;
  align-items: center;
  padding: 0 16px 0 13px;
  border-top: 3px solid #cbcbcb;
  background: #f1f1f1;
}
.player {
  display: flex;
  gap: 15px;
}
.player svg {
  width: 16px;
  height: 18px;
  fill: #444;
}
.history {
  margin-left: 24px;
  padding-top: 6px;
}
.features {
  display: flex;
}
.features button {
  width: 30px;
  height: 30px;
}
.features .marked {
  background: #e3e51f;
  border-radius: 2px;
}
.scale {
  width: 330px;
  height: 9px;
}
.marker {
  width: 16px;
  height: 40px;
  margin-left: -8px;
}
.prefs {
  margin-left: auto;
}

/* taskbar */
.taskbar {
  height: 50px;
  flex: none;
  display: flex;
  align-items: center;
  background: linear-gradient(90deg, #e3d4e7, #e5d3e4 55%, #e3d3d5 68%, #e9d3d3);
  font-family: "Open Sans", sans-serif;
  font-size: 14px;
  color: #111;
}
.start {
  width: 60px;
  height: 50px;
}
.search {
  width: 430px;
  height: 50px;
  display: flex;
  align-items: center;
  gap: 13px;
  padding-left: 14px;
  background: #fff;
  border: 1px solid #c6c6c6;
}
.search svg {
  width: 22px;
  height: 20px;
}
.search input {
  flex: 1;
  border: 0;
  padding: 0;
  outline: 0;
  font: 17px "Open Sans", sans-serif;
}
.search input::placeholder {
  color: #333;
}
.apps {
  display: flex;
  gap: 2px;
}
.apps button {
  position: relative;
  width: 60px;
  height: 50px;
}
.apps svg {
  width: 28px;
  height: 28px;
}
.running::after {
  content: "";
  position: absolute;
  left: 5px;
  right: 5px;
  bottom: 0;
  height: 3px;
  background: #00b4c5;
}
.apps .alert {
  background: linear-gradient(90deg, #f9ac7a 55px, #e59463 55px, #e59463 56px, #f9ac7a 56px);
}
.alert::after {
  left: 0;
  right: 0;
  background: #ff7000;
}
.apps .current {
  background: #f4edf2;
}
.current::after {
  left: 0;
  right: 0;
}
.f360 {
  font-family: Roboto, sans-serif;
  font-size: 6px;
  font-weight: bold;
  fill: #d9812e;
}
.tray {
  margin-left: auto;
  display: flex;
  align-items: center;
  gap: 10px;
}
.lang {
  margin-left: 5px;
}
.clock {
  flex-direction: column;
  line-height: 24px;
  margin-left: 13px;
}
.notes {
  position: relative;
  margin: 0 15px 0 17px;
}
.notes svg {
  width: 20px;
  height: 20px;
}
.badge {
  position: absolute;
  top: 8px;
  left: 9px;
  width: 20px;
  height: 20px;
  border: 1px solid #888;
  border-radius: 50%;
  background: #dcd6d6;
  font-size: 13px;
  line-height: 18px;
}
.peek {
  width: 6px;
  height: 50px;
  border-left: 1px solid #b9a8aa;
}
```
